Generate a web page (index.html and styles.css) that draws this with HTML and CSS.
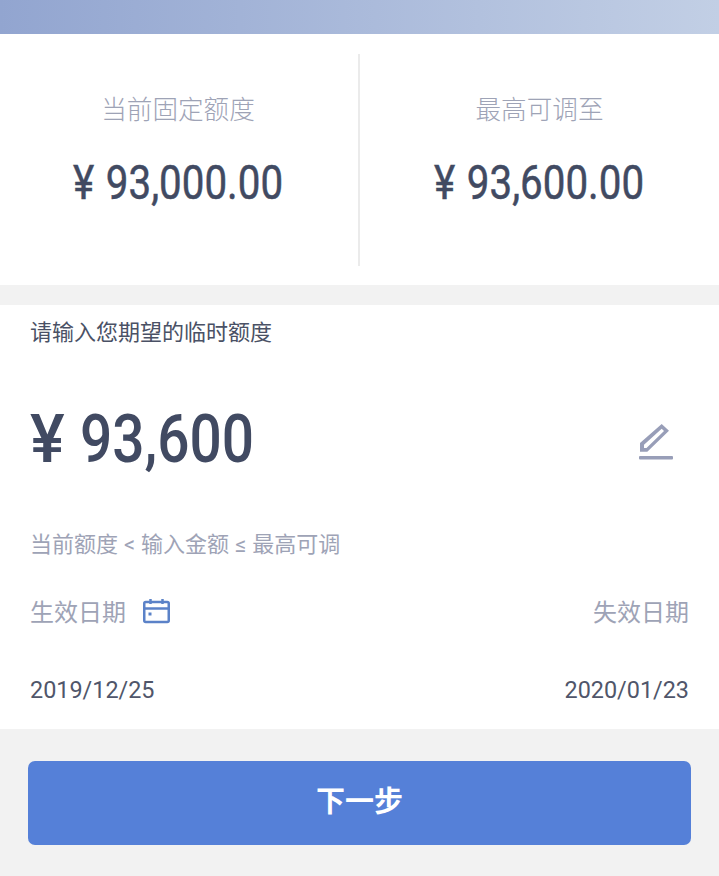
FILE: index.html

```html
<!DOCTYPE html>
<html lang="zh-CN">
    <head>
        <meta charset="UTF-8" />
        <title>临时额度</title>

        <link rel="stylesheet" href="styles.css">
    </head>
    <body>
        <div class="topbar"></div>

        <div class="limits">
            <div class="limit">
                <p class="limit-label">当前固定额度</p>
                <p class="limit-value"><span class="narrow">¥ 93,000.00</span></p>
            </div>
            <div class="limit">
                <p class="limit-label">最高可调至</p>
                <p class="limit-value"><span class="narrow">¥ 93,600.00</span></p>
            </div>
        </div>

        <div class="form">
            <p class="form-title">请输入您期望的临时额度</p>

            <div class="amount">
                <span class="amount-value"><span class="yen">¥</span>93,600</span>
                <svg class="edit" width="36" height="36" viewBox="0 0 36 36" fill="none">
                    <path d="M2 27.700 V19 L23.700 0 L31 6.700 L9.300 27.700 Z M6 24 H8.500 L26 7 L23.700 4.800 L6 20.800 Z" fill="#989eb8" fill-rule="evenodd"/>
                    <rect x="1" y="32" width="34" height="3.500" rx="1" fill="#989eb8"/>
                </svg>
            </div>

            <p class="hint">当前额度 &lt; 输入金额 ≤ 最高可调</p>

            <div class="dates">
                <div class="date-col">
                    <div class="date-label">
                        生效日期
                        <svg class="calendar" width="28" height="28" viewBox="0 0 28 28" fill="none">
                            <rect x="2.250" y="5" width="24.500" height="20" rx="1.500" stroke="#5b82c8" stroke-width="2.500"/>
                            <path d="M2 11.500 H27" stroke="#5b82c8" stroke-width="2.500"/>
                            <path d="M8.500 2 V7 M20.500 2 V7" stroke="#5b82c8" stroke-width="2.500"/>
                            <rect x="6.500" y="15.500" width="3" height="3" fill="#5b82c8"/>
                        </svg>
                    </div>
                    <div class="date-value">2019/12/25</div>
                </div>
                <div class="date-col date-col-right">
                    <div class="date-label">失效日期</div>
                    <div class="date-value">2020/01/23</div>
                </div>
            </div>
        </div>

        <div class="footer">
            <button class="next">下一步</button>
        </div>
    </body>
</html>
```

FILE: styles.css

```css
html, body {
    margin: 0;
    height: 100%;
}

body {
    font-family: Roboto, "Noto Sans CJK SC", sans-serif;
    background-color: #f2f2f2;
    overflow: hidden;
}

p {
    margin: 0;
}

.topbar {
    height: 34px;
    background: linear-gradient(to right, #92a5d0, #c2cfe5);
}

.limits {
    display: flex;
    height: 251px;
    padding-top: 20px;
    box-sizing: border-box;
    background-color: #fff;
}

.limit {
    flex: 1;
    height: 212px;
    text-align: center;
}

.limit:first-child {
    flex: 0 0 360px;
    box-sizing: border-box;
    padding-right: 2px;
    border-right: 2px solid #ebebeb;
}

.limit-label {
    margin-top: 38px;
    font-size: 25.600px;
    line-height: 36px;
    color: #9ea3b6;
    font-weight: 300;
}

.limit-value {
    margin-top: 27px;
    font-size: 48px;
    line-height: 56px;
    word-spacing: 2px;
    color: #414a62;
    -webkit-text-stroke: 0.5px #414a62;
}

.narrow {
    display: inline-block;
    transform: scaleX(0.84);
}

.form {
    height: 424px;
    margin-top: 20px;
    padding: 0 30px;
    box-sizing: border-box;
    background-color: #fff;
}

.form-title {
    font-size: 22px;
    line-height: 30px;
    padding-top: 13px;
    color: #4a5165;
}

.amount {
    display: flex;
    justify-content: space-between;
    align-items: center;
    height: 78px;
    margin-top: 52px;
}

.amount-value {
    display: inline-block;
    font-size: 66px;
    font-weight: 500;
    color: #414a62;
    transform: scaleX(0.86);
    transform-origin: left center;
}

.yen {
    display: inline-block;
    margin-right: 23px;
    transform: scaleX(1.15);
    transform-origin: left center;
}

.edit {
    margin-top: 6px;
    margin-right: 15px;
}

.hint {
    margin-top: 52px;
    font-size: 22px;
    line-height: 30px;
    word-spacing: 0.500px;
    color: #9ea3b6;
}

.dates {
    display: flex;
    justify-content: space-between;
    margin-top: 30px;
}

.date-label {
    display: flex;
    align-items: center;
    gap: 16px;
    height: 40px;
    font-size: 24px;
    color: #9ea3b6;
}

.calendar {
    margin-top: 2px;
}

.date-col-right {
    text-align: right;
}

.date-col-right .date-label {
    justify-content: flex-end;
}

.date-value {
    margin-top: 45px;
    font-size: 23.400px;
    line-height: 30px;
    color: #50566a;
}

.footer {
    padding: 32px 28px 0;
}

.next {
    display: block;
    width: 100%;
    height: 84px;
    padding-bottom: 9px;
    border: 0;
    border-radius: 7px;
    background-color: #5580d8;
    color: #fff;
    font-family: inherit;
    font-size: 29px;
    font-weight: 700;
}
```
